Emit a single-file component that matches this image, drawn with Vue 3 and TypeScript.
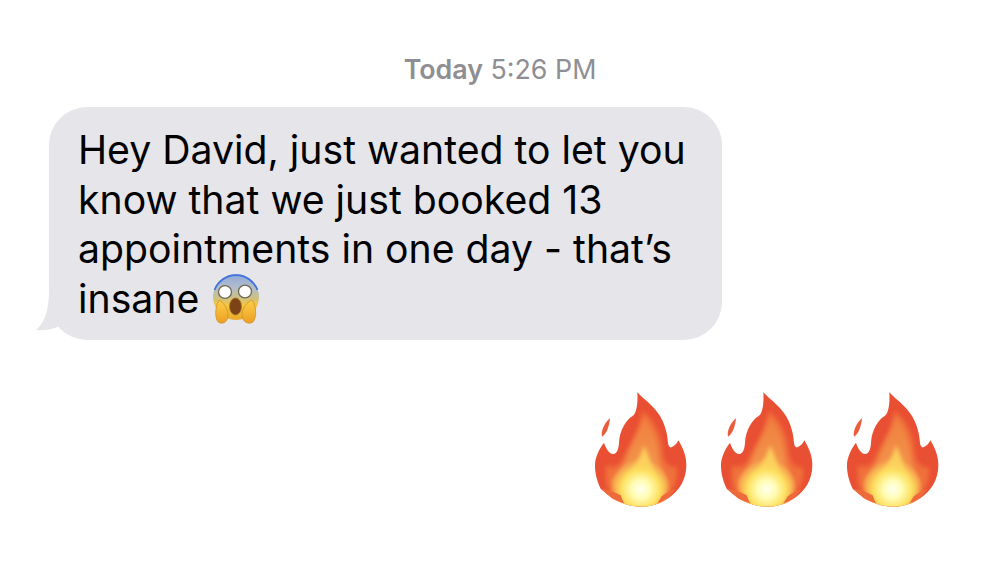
<script setup lang="ts">
const flames = [1, 2, 3]
const outer =
  'M172 36C182 50 205 64 225 88C248 114 262 150 264 190C265 198 270 204 274 202C284 198 291 190 295 181C310 205 320 232 319 258C318 300 298 332 266 354C240 372 212 380 185 380C150 380 118 368 95 354L62 326C52 305 44 280 45 252C47 228 58 206 72 188C78 206 88 222 100 222C112 220 116 205 117 188C119 150 140 118 158 108C170 100 174 70 172 36Z'
</script>

<template>
  <main class="page">
    <p class="time"><b>Today</b> 5:26 PM</p>
    <div class="bubble">
      <svg class="tail" viewBox="0 0 50 50" width="50" height="50">
        <path d="M13 0C13 18 9 32 0 39C12 40 22 37 30 31C38 37 44 39 50 39V0Z" fill="#e5e5ea" />
      </svg>
      <p class="msg">Hey David, just wanted to let you<br />know that we just booked 13<br />appointments in one day - that’s<br />insane <svg class="face" viewBox="0 0 70 60" width="70" height="60">
          <defs>
            <linearGradient id="faceFill" x1="0" y1="0" x2="0" y2="1">
              <stop offset="0" stop-color="#8fa9dc" />
              <stop offset="0.3" stop-color="#b3bdca" />
              <stop offset="0.5" stop-color="#c9c08c" />
              <stop offset="0.68" stop-color="#f4c63f" />
              <stop offset="1" stop-color="#eda92a" />
            </linearGradient>
            <linearGradient id="handFill" x1="0" y1="0" x2="0" y2="1">
              <stop offset="0" stop-color="#fbcf4a" />
              <stop offset="1" stop-color="#ee9f22" />
            </linearGradient>
          </defs>
          <circle cx="36" cy="32" r="23" fill="url(#faceFill)" />
          <path d="M14.500 25A23 23 0 0 1 57.500 25" fill="none" stroke="#3f72de" stroke-width="1.800" />
          <ellipse cx="25" cy="27" rx="6.500" ry="6.300" fill="#fff" stroke="#6f6850" stroke-width="1.300" />
          <ellipse cx="45" cy="26.500" rx="6.500" ry="6.300" fill="#fff" stroke="#6f6850" stroke-width="1.300" />
          <ellipse cx="35.500" cy="41.500" rx="6" ry="8.500" fill="#7d4216" stroke="#a8752a" stroke-width="0.800" />
          <path d="M19 35C23 37 27.500 43 28 49C28.500 55 25 59 20 58C15 57 14 44 19 35Z" fill="url(#handFill)" stroke="#c98e24" stroke-width="0.700" />
          <path d="M52 35C47 37 42.500 43 42 49C41.500 55 46 59 51 58C56 57 58 44 52 35Z" fill="url(#handFill)" stroke="#c98e24" stroke-width="0.700" />
        </svg></p>
    </div>
    <div class="fires">
      <svg v-for="n in flames" :key="n" class="fire" viewBox="0 0 360 405" width="120" height="135">
        <defs>
          <clipPath :id="`shape${n}`">
            <path :d="outer" />
          </clipPath>
          <filter :id="`soft${n}`" x="-20%" y="-20%" width="140%" height="140%">
            <feGaussianBlur stdDeviation="7" />
          </filter>
          <radialGradient :id="`glow${n}`" gradientUnits="userSpaceOnUse" cx="182" cy="328" r="92">
            <stop offset="0" stop-color="#fffff0" />
            <stop offset="0.3" stop-color="#fffcb4" />
            <stop offset="0.62" stop-color="#fde060" />
            <stop offset="1" stop-color="#fbc95a" stop-opacity="0" />
          </radialGradient>
          <linearGradient :id="`mid${n}`" x1="0" y1="0" x2="0" y2="1">
            <stop offset="0" stop-color="#f0803f" />
            <stop offset="0.55" stop-color="#f3934a" />
            <stop offset="1" stop-color="#f8ab4a" />
          </linearGradient>
        </defs>
        <path d="M66 170C62 155 72 130 90 114C88 135 82 160 66 170Z" fill="#ea5c3c" />
        <path :d="outer" fill="#e94f33" />
        <g :clip-path="`url(#shape${n})`">
          <path d="M188 92C225 125 245 165 248 215C250 240 262 262 290 262C296 300 280 340 240 362C200 385 140 385 110 360C85 345 72 310 78 255C96 264 118 262 130 232C150 190 178 150 188 92Z" fill="#f0703a" :filter="`url(#soft${n})`" />
          <path d="M192 112C222 150 232 190 236 230C240 270 262 290 262 310C258 350 220 380 180 380C140 380 106 350 96 310C94 285 125 275 140 235C155 190 180 160 192 112Z" :fill="`url(#mid${n})`" :filter="`url(#soft${n})`" />
          <path d="M192 195C205 225 218 255 226 290C232 330 210 375 182 375C150 375 130 340 138 305C148 270 182 240 192 195Z" fill="#fbd05c" :filter="`url(#soft${n})`" />
          <rect x="60" y="220" width="250" height="170" :fill="`url(#glow${n})`" />
          <path d="M62 326C80 328 100 334 122 346C125 354 128 362 132 370C110 362 82 348 62 326Z" fill="#ee6a3a" />
          <path d="M286 326C276 330 262 336 244 350C240 358 236 364 232 370C256 362 274 348 286 326Z" fill="#ee6a3a" />
        </g>
      </svg>
    </div>
  </main>
</template>

<style scoped>
.page {
  height: 572px;
  display: flex;
  flex-direction: column;
  font-family: Inter, "Liberation Sans", sans-serif;
  color: #000;
}

.time {
  margin: 54px 0 23px;
  text-align: center;
  font-size: 26.800px;
  line-height: 30px;
  color: #8e8e93;
}

.time b {
  font-weight: 600;
}

.bubble {
  position: relative;
  margin-left: 49px;
  width: 673px;
  height: 233px;
  box-sizing: border-box;
  padding: 18px 0 0 29px;
  background: #e5e5ea;
  border-radius: 38px;
}

.tail {
  position: absolute;
  left: -13px;
  bottom: -1px;
}

.msg {
  position: relative;
  margin: 0;
  font-size: 39.200px;
  line-height: 49.500px;
  white-space: nowrap;
}

.face {
  vertical-align: top;
  margin: -8.500px 0 -11px -10px;
}

.fires {
  display: flex;
  justify-content: flex-end;
  gap: 6px;
  margin-top: 40px;
  padding-right: 48px;
}
</style>

<style>
html,
body {
  background: #fff;
  overflow: hidden;
}
</style>
